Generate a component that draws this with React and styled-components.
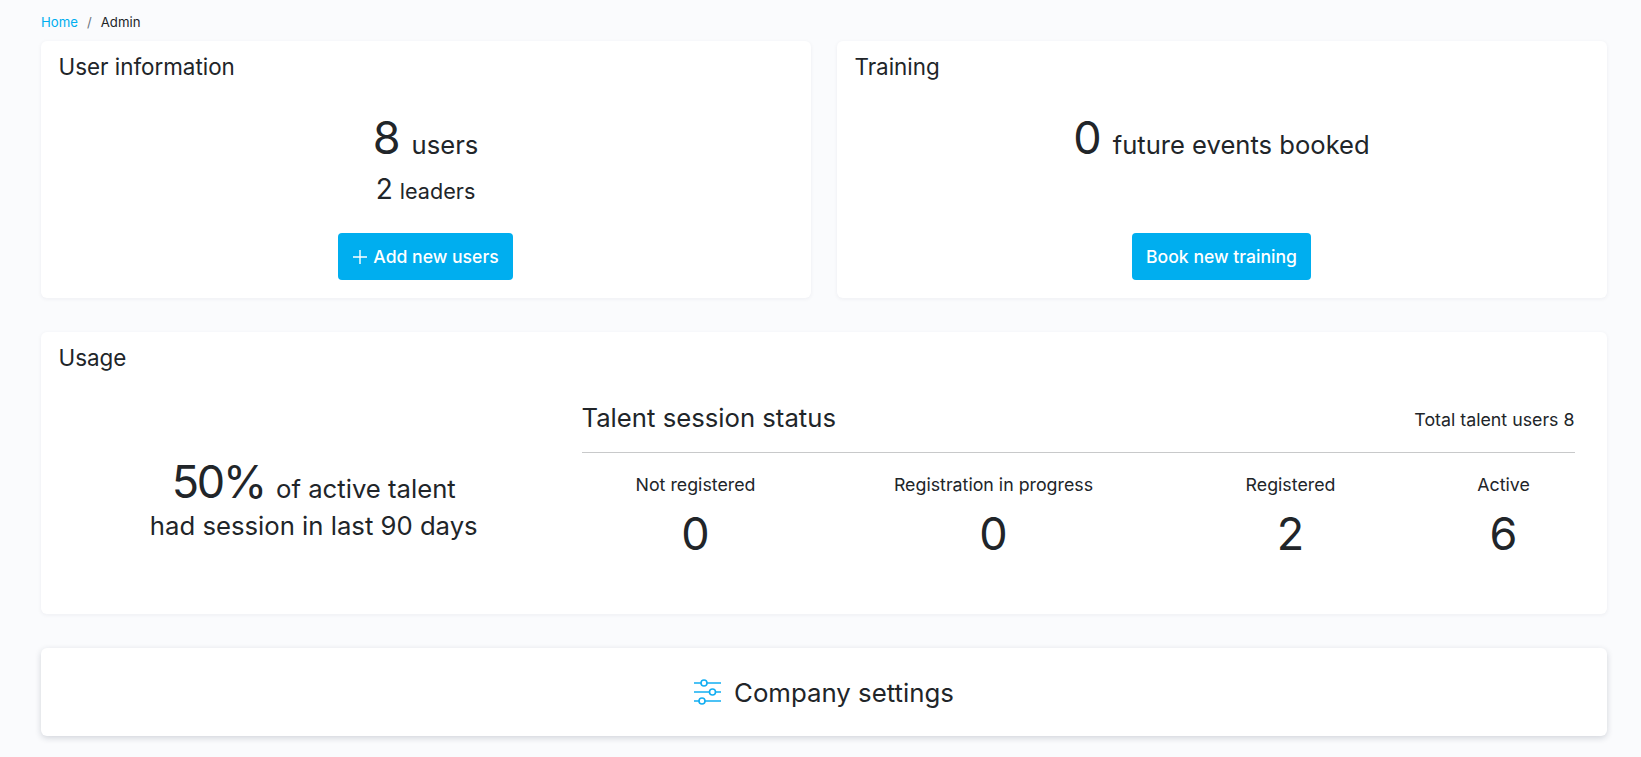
import React from "react";
import styled, { createGlobalStyle } from "styled-components";

const Global = createGlobalStyle`
  html, body { margin: 0; padding: 0; background: #fafbfd; }
  body { font-family: Inter, "Noto Sans", sans-serif; color: #212529; }
`;

const Page = styled.div`
  height: 757px;
  box-sizing: border-box;
  padding: 14px 34px 0 41px;
  overflow: hidden;
`;

const Crumbs = styled.nav`
  display: flex;
  gap: 9px;
  height: 27px;
  font-size: 13.2px;
  line-height: 16px;
  color: #212529;
`;
const CrumbLink = styled.a`color: #00aeef;`;
const CrumbSep = styled.span`color: #6c757d;`;

const TopRow = styled.div`
  display: grid;
  grid-template-columns: 1fr 1fr;
  column-gap: 26px;
`;

const Card = styled.section`
  background: #fff;
  border-radius: 6px;
  box-shadow: 0 1px 4px rgba(30, 40, 60, 0.06);
  box-sizing: border-box;
  padding: 13px 19px 0 18px;
  height: ${(p) => p.$h}px;
  margin-bottom: ${(p) => p.$mb || 0}px;
`;

const CardTitle = styled.h2`
  margin: 0 0 0 -0.5px;
  font-size: 22.4px;
  line-height: 26px;
  font-weight: 400;
`;

const Centered = styled.div`
  display: flex;
  flex-direction: column;
  align-items: center;
`;

const StatLine = styled.div`
  height: 58px;
  margin-top: 29px;
  font-size: 25.6px;
  line-height: 58px;
  white-space: nowrap;
`;
const BigNum = styled.span`
  font-size: 45px;
  margin-right: 11px;
`;
const SubLine = styled.div`
  height: 46px;
  font-size: 21.6px;
  line-height: 44px;
  white-space: nowrap;
`;
const SubNum = styled.span`
  font-size: 28px;
  margin-right: 7px;
`;
const Button = styled.button`
  display: flex;
  align-items: center;
  gap: 5px;
  height: 47px;
  margin-top: ${(p) => p.$mt}px;
  padding: 0 14.5px;
  border: 0;
  border-radius: 4px;
  background: #00aeef;
  color: #fff;
  font: 500 17.6px Inter, sans-serif;
`;

const UsageBody = styled.div`
  display: grid;
  grid-template-columns: 522.5px 993px;
  margin-top: 18px;
`;
const UsageLeft = styled.div`
  text-align: center;
  padding: 64px 13px 0 0;
  font-size: 25.7px;
  line-height: 34px;
`;
const Percent = styled.span`
  font-size: 45px;
  line-height: 58px;
  letter-spacing: -2.2px;
  margin-right: 11px;
`;
const UsageLeftLine = styled.div`
  white-space: nowrap;
  & + & {
    margin-top: -2px;
  }
`;
const StatusHead = styled.div`
  display: flex;
  justify-content: space-between;
  align-items: center;
  height: 64px;
  padding: 0 0 6px;
  box-sizing: border-box;
  border-bottom: 1px solid #c8c9ca;
`;
const StatusTitle = styled.h3`
  margin: 0;
  font-size: 25.7px;
  font-weight: 400;
`;
const StatusTotal = styled.span`
  font-size: 17.8px;
  margin-top: 3px;
`;
const StatusGrid = styled.div`
  display: grid;
  grid-template-columns: 228px 368px 226px 200px;
  margin-right: -29px;
  padding-top: 19px;
  text-align: center;
`;
const StatusLabel = styled.div`
  font-size: 17.8px;
  line-height: 26px;
`;
const StatusValue = styled.div`
  font-size: 45px;
  line-height: 58px;
  margin-top: 7px;
`;

const SettingsCard = styled.section`
  display: flex;
  align-items: center;
  justify-content: center;
  gap: 13px;
  height: 88px;
  background: #fff;
  border-radius: 6px;
  box-shadow: 0 2px 6px rgba(30, 40, 60, 0.18);
  font-size: 25.8px;
`;

const SlidersIcon = () => (
  <svg width="27" height="26" viewBox="0 0 27 26" fill="none" stroke="#12aef2" strokeWidth="1.6">
    <path d="M0 4h7M13 4h14M0 13h15.500M21.500 13H27M0 22h5M11 22h16" />
    <circle cx="10" cy="4" r="3" />
    <circle cx="18.500" cy="13" r="3" />
    <circle cx="8" cy="22" r="3" />
  </svg>
);

const PlusIcon = () => (
  <svg width="16" height="16" viewBox="0 0 16 16" fill="none" stroke="#fff" strokeWidth="1.4">
    <path d="M8 1v14M1 8h14" />
  </svg>
);

const statuses = [
  ["Not registered", 0],
  ["Registration in progress", 0],
  ["Registered", 2],
  ["Active", 6],
];

export default function App() {
  return (
    <>
      <Global />
      <Page>
        <Crumbs>
          <CrumbLink>Home</CrumbLink>
          <CrumbSep>/</CrumbSep>
          <span>Admin</span>
        </Crumbs>
        <TopRow>
          <Card $h={257} $mb={34}>
            <CardTitle>User information</CardTitle>
            <Centered>
              <StatLine><BigNum>8</BigNum>users</StatLine>
              <SubLine><SubNum>2</SubNum>leaders</SubLine>
              <Button $mt={20}><PlusIcon />Add new users</Button>
            </Centered>
          </Card>
          <Card $h={257} $mb={34}>
            <CardTitle>Training</CardTitle>
            <Centered>
              <StatLine><BigNum>0</BigNum>future events booked</StatLine>
              <Button $mt={66}>Book new training</Button>
            </Centered>
          </Card>
        </TopRow>
        <Card $h={282} $mb={34}>
          <CardTitle>Usage</CardTitle>
          <UsageBody>
            <UsageLeft>
              <UsageLeftLine><Percent>50%</Percent>of active talent</UsageLeftLine>
              <UsageLeftLine>had session in last 90 days</UsageLeftLine>
            </UsageLeft>
            <div>
              <StatusHead>
                <StatusTitle>Talent session status</StatusTitle>
                <StatusTotal>Total talent users 8</StatusTotal>
              </StatusHead>
              <StatusGrid>
                {statuses.map(([label, value]) => (
                  <div key={label}>
                    <StatusLabel>{label}</StatusLabel>
                    <StatusValue>{value}</StatusValue>
                  </div>
                ))}
              </StatusGrid>
            </div>
          </UsageBody>
        </Card>
        <SettingsCard>
          <SlidersIcon />
          Company settings
        </SettingsCard>
      </Page>
    </>
  );
}
